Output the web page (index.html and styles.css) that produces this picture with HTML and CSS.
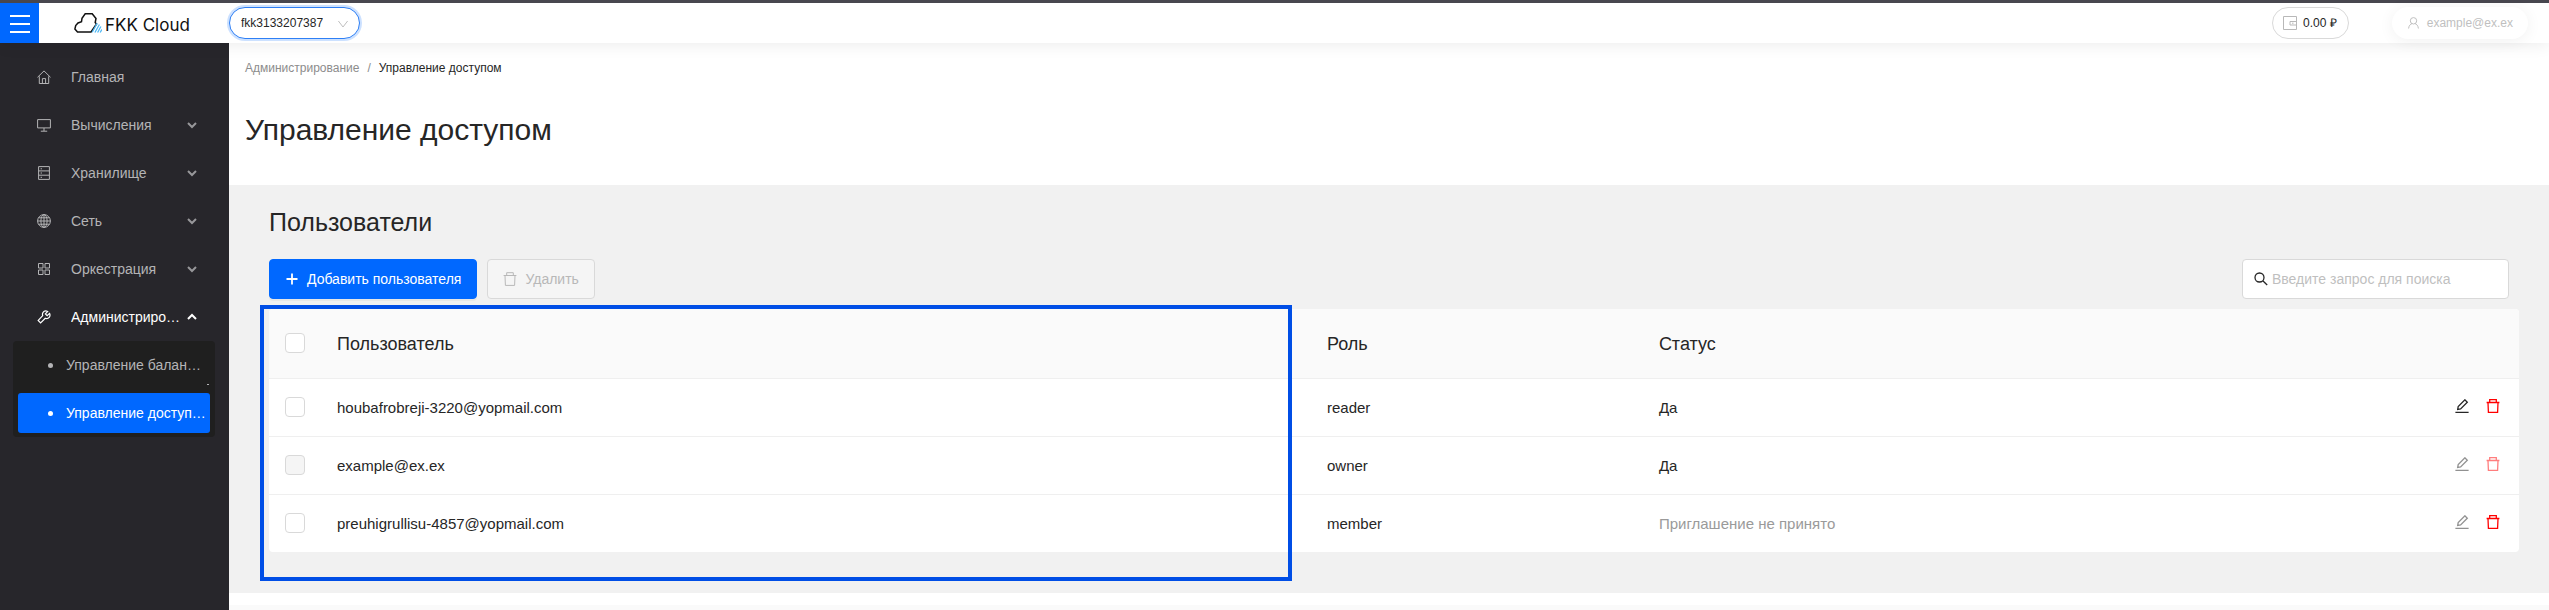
FILE: index.html
```html
<!DOCTYPE html>
<html lang="ru">
<head>
<meta charset="utf-8">
<title>Управление доступом</title>
<meta name="viewport" content="width=device-width, initial-scale=1">
<link rel="stylesheet" href="styles.css">
</head>
<body>
<svg class="sprite" aria-hidden="true">
  <symbol id="i-trash" viewBox="0 0 14 14"><path d="M.6 3.500h12.800M3.700 3.300V.700h6.600v2.600M2 3.700l.4 9.700h9.200l.4-9.700"/></symbol>
  <symbol id="i-edit" viewBox="0 0 14 14"><path d="M.4 13.300h13.200M2.700 10.400l.5-2.900L9.900.8l2.400 2.400-6.700 6.700z"/></symbol>
  <symbol id="i-down" viewBox="0 0 10 10"><path d="M1 3l4 4 4-4"/></symbol>
  <symbol id="i-up" viewBox="0 0 10 10"><path d="M1 7l4-4 4 4"/></symbol>
</svg>

<header class="topbar">
  <button class="burger" type="button" aria-label="Меню"><span></span><span></span><span></span></button>
  <a class="logo" href="#">
    <svg class="logo-mark" viewBox="0 0 28 20" aria-hidden="true">
      <path class="logo-cloud" d="M17 19H3.500L.9 16l.8-3.500L4 10l3.500-1.200L8 5.200 11.200.800h7L22 5.500l-.8 4 1.300 1.500z"/>
      <path class="logo-rain" d="M18.200 19.300l5-9M20.900 19.500l4.500-8M23.600 19.500l3.300-6M26.200 19.500l1.600-3"/>
    </svg>
    <span>FKK Cloud</span>
  </a>
  <label class="project">
    <select class="project-select" aria-label="Проект"><option>fkk3133207387</option></select>
    <svg class="project-arrow" viewBox="0 0 10 8" aria-hidden="true"><path d="M.4 1l4.600 6 4.600-6"/></svg>
  </label>
  <div class="account">
    <button class="pill balance" type="button">
      <svg class="icon-wallet" viewBox="0 0 14 14" aria-hidden="true"><path d="M.5.500h13v13H.5zM13.500 5.500h-6.500v3.500h6.500M9 7.200h1.500"/></svg>
      <span>0.00 ₽</span>
    </button>
    <button class="pill user" type="button">
      <svg class="icon-user" viewBox="0 0 11 12" aria-hidden="true"><circle cx="5.500" cy="3.800" r="3.200"/><path d="M.6 11.500c.2-2.800 1.900-4.500 3.400-4.900M10.400 11.500c-.2-2.800-1.900-4.500-3.400-4.900"/></svg>
      <span>example@ex.ex</span>
    </button>
  </div>
</header>

<div class="layout">
  <nav class="sidebar" aria-label="Разделы">
    <ul class="menu">
      <li><a class="menu-item" href="#">
        <svg class="menu-icon" viewBox="0 0 14 14"><path d="M.5 7.300L7 .9l6.500 6.400M2.300 6.300v7.200h9.400V6.300M5.400 13.300V8.600h3.200v4.700"/></svg>
        <span class="menu-label">Главная</span></a></li>
      <li><button class="menu-item" type="button">
        <svg class="menu-icon" viewBox="0 0 14 14"><path d="M.6 1.600h12.800v8.300H.6zM7 10v3M3.800 13.200h6.400"/></svg>
        <span class="menu-label">Вычисления</span><svg class="menu-arrow"><use href="#i-down"/></svg></button></li>
      <li><button class="menu-item" type="button">
        <svg class="menu-icon" viewBox="0 0 14 14"><path d="M1.600.600h10.800v12.800H1.600zM1.600 4.900h10.800M1.600 9.200h10.800M3.600 2.800h1.400M3.600 7h1.400M3.600 11.300h1.400"/></svg>
        <span class="menu-label">Хранилище</span><svg class="menu-arrow"><use href="#i-down"/></svg></button></li>
      <li><button class="menu-item" type="button">
        <svg class="menu-icon" viewBox="0 0 14 14"><circle cx="7" cy="7" r="6.400"/><ellipse cx="7" cy="7" rx="3.100" ry="6.400"/><path d="M7 .6v12.800M.6 7h12.800M1.600 3.800h10.800M1.600 10.200h10.800"/></svg>
        <span class="menu-label">Сеть</span><svg class="menu-arrow"><use href="#i-down"/></svg></button></li>
      <li><button class="menu-item" type="button">
        <svg class="menu-icon" viewBox="0 0 14 14"><path d="M1.500 1.500h4.500v4.500H1.500zM8 1.500h4.500v4.500H8zM1.500 8h4.500v4.500H1.500zM8 8h4.500v4.500H8z"/></svg>
        <span class="menu-label">Оркестрация</span><svg class="menu-arrow"><use href="#i-down"/></svg></button></li>
      <li><button class="menu-item menu-item--open" type="button" aria-expanded="true">
        <svg class="menu-icon" viewBox="0 0 14 14"><path d="M12.500 3.400L10.200 5.700 8.400 3.900l2.300-2.400C9 .7 7 1 6.100 2.400c-.8 1.100-.8 2.200-.4 3.300L1.200 10.400l2.400 2.500 4.700-4.600c1.400.5 2.900.2 3.900-1 .9-1.100 1-2.600.3-3.900z"/></svg>
        <span class="menu-label">Администрирование</span><svg class="menu-arrow"><use href="#i-up"/></svg></button>
        <ul class="submenu">
          <li><a class="submenu-item submenu-item--clipped" href="#"><span class="menu-label">Управление балансом</span></a></li>
          <li><a class="submenu-item submenu-item--active" href="#" aria-current="page"><span class="menu-label">Управление доступом</span></a></li>
        </ul>
      </li>
    </ul>
  </nav>

  <main class="content">
    <div class="page-head">
      <nav class="breadcrumbs" aria-label="Путь">
        <a href="#">Администрирование</a><span class="slash">/</span><span class="current">Управление доступом</span>
      </nav>
      <h1 class="page-title">Управление доступом</h1>
    </div>

    <section class="panel">
      <h2 class="panel-title">Пользователи</h2>
      <div class="toolbar">
        <button class="btn btn--primary" type="button">
          <svg class="btn-icon" viewBox="0 0 12 12" aria-hidden="true"><path d="M6 .5v11M.5 6h11"/></svg>
          <span>Добавить пользователя</span>
        </button>
        <button class="btn" type="button" disabled>
          <svg class="btn-icon btn-icon--thin"><use href="#i-trash"/></svg>
          <span>Удалить</span>
        </button>
        <label class="search">
          <svg class="search-icon" viewBox="0 0 14 14" aria-hidden="true"><circle cx="5.500" cy="5.500" r="4.500"/><path d="M8.800 8.800l4.400 4.200"/></svg>
          <input class="search-input" type="search" placeholder="Введите запрос для поиска" aria-label="Поиск">
        </label>
      </div>

      <div class="table-wrap">
        <table class="users">
          <thead>
            <tr><th class="col-check"><input class="check" type="checkbox" aria-label="Выбрать всех"></th><th class="col-user">Пользователь</th><th class="col-role">Роль</th><th class="col-status">Статус</th><th class="col-actions" aria-label="Действия"></th></tr>
          </thead>
          <tbody>
            <tr>
              <td><input class="check" type="checkbox" aria-label="houbafrobreji-3220@yopmail.com"></td><td>houbafrobreji-3220@yopmail.com</td><td>reader</td><td>Да</td>
              <td><div class="actions"><button class="act" type="button" aria-label="Изменить"><svg><use href="#i-edit"/></svg></button><button class="act act--delete" type="button" aria-label="Удалить"><svg><use href="#i-trash"/></svg></button></div></td>
            </tr>
            <tr>
              <td><input class="check" type="checkbox" disabled aria-label="example@ex.ex"></td><td>example@ex.ex</td><td>owner</td><td>Да</td>
              <td><div class="actions"><button class="act" type="button" disabled aria-label="Изменить"><svg><use href="#i-edit"/></svg></button><button class="act act--delete" type="button" disabled aria-label="Удалить"><svg><use href="#i-trash"/></svg></button></div></td>
            </tr>
            <tr>
              <td><input class="check" type="checkbox" aria-label="preuhigrullisu-4857@yopmail.com"></td><td>preuhigrullisu-4857@yopmail.com</td><td>member</td><td class="muted">Приглашение не принято</td>
              <td><div class="actions"><button class="act" type="button" disabled aria-label="Изменить"><svg><use href="#i-edit"/></svg></button><button class="act act--delete" type="button" aria-label="Удалить"><svg><use href="#i-trash"/></svg></button></div></td>
            </tr>
          </tbody>
        </table>
        <div class="highlight" aria-hidden="true"></div>
      </div>
    </section>
    <footer class="footer"></footer>
  </main>
</div>
</body>
</html>
```
FILE: styles.css
```css
* {
  box-sizing: border-box;
}

body {
  margin: 0;
  min-height: 100vh;
  display: flex;
  flex-direction: column;
  font: 14px/20px "Liberation Sans", Arial, sans-serif;
  color: #262626;
  background: #fff;
}

button,
input,
select {
  font: inherit;
  color: inherit;
}

button {
  margin: 0;
  padding: 0;
  border: 0;
  background: none;
  cursor: pointer;
}

a {
  color: inherit;
  text-decoration: none;
}

ul {
  margin: 0;
  padding: 0;
  list-style: none;
}

svg {
  flex: none;
  fill: none;
  stroke: currentColor;
}

.sprite {
  position: absolute;
  width: 0;
  height: 0;
}

/* Top bar */
.topbar {
  position: relative;
  z-index: 1;
  display: flex;
  align-items: stretch;
  height: 43px;
  padding-right: 21px;
  border-top: 3px solid #48474f;
  background: #fff;
  box-shadow: 0 2px 16px rgba(0, 0, 0, 0.08);
  font-size: 12px;
}

.burger {
  display: flex;
  flex-direction: column;
  align-items: center;
  justify-content: center;
  gap: 6px;
  width: 39px;
  padding-top: 2px;
  background: #0068ff;
}

.burger span {
  width: 20px;
  height: 2px;
  background: #fff;
}

.logo {
  display: flex;
  align-items: center;
  gap: 3px;
  width: 190px;
  padding: 4px 0 0 35px;
  color: #111;
  font: 17px/20px Inter, sans-serif;
}

.logo-mark {
  width: 28px;
  height: 20px;
  margin-bottom: 4px;
}

.logo-cloud {
  stroke: #111;
  stroke-width: 1.5;
}

.logo-rain {
  stroke: #4db8f5;
  stroke-width: 1.3;
}

.project {
  position: relative;
  align-self: center;
}

.project-select {
  appearance: none;
  display: block;
  width: 131px;
  height: 32px;
  padding: 0 36px 0 11px;
  border: 1px solid #2e7ff5;
  border-radius: 16px;
  outline: 0;
  background: #fff;
  box-shadow: 0 0 0 2px rgba(0, 104, 255, 0.2);
}

.project-arrow {
  position: absolute;
  top: 13px;
  right: 12px;
  width: 10px;
  height: 8px;
  color: #bfbfbf;
  pointer-events: none;
}

.account {
  display: flex;
  align-items: center;
  gap: 43px;
  margin-left: auto;
}

.pill {
  display: flex;
  align-items: center;
  height: 32px;
  border-radius: 16px;
  background: #fff;
}

.balance {
  gap: 6px;
  padding: 0 11px 0 10px;
  border: 1px solid #d9d9d9;
}

.icon-wallet {
  width: 14px;
  height: 14px;
  color: #b8b8b8;
}

.user {
  gap: 8px;
  padding: 0 15px 0 16px;
  color: #bfbfbf;
  box-shadow: 0 2px 16px rgba(0, 0, 0, 0.06);
}

.icon-user {
  width: 11px;
  height: 12px;
}

/* Sidebar */
.layout {
  flex: 1;
  display: flex;
}

.sidebar {
  flex: none;
  width: 229px;
  padding-top: 10px;
  background: #27262b;
  color: #b4b4b6;
}

.menu-item {
  display: flex;
  align-items: center;
  width: 100%;
  height: 48px;
  padding: 0 32px 0 37px;
  text-align: left;
}

.menu-item--open {
  color: #fff;
}

.menu-icon {
  width: 14px;
  height: 14px;
  margin-right: 20px;
}

.menu-item--open .menu-icon {
  stroke-width: 1.2;
}

.menu-label {
  flex: 1;
  overflow: hidden;
  white-space: nowrap;
  text-overflow: ellipsis;
}

.menu-arrow {
  width: 10px;
  height: 10px;
  margin-left: 6px;
  opacity: 0.8;
  stroke-width: 2;
}

.menu-item--open .menu-arrow {
  opacity: 1;
}

.submenu {
  display: flex;
  flex-direction: column;
  gap: 8px;
  margin: 0 14px 0 13px;
  padding: 4px 5px;
  border-radius: 4px;
  background: #1f1f1f;
}

.submenu-item {
  position: relative;
  display: flex;
  align-items: center;
  height: 40px;
  padding: 0 4px 0 30px;
  border-radius: 3px;
}

.submenu-item::before {
  content: "";
  flex: none;
  width: 5px;
  height: 5px;
  margin-right: 13px;
  border-radius: 50%;
  background: currentColor;
}

.submenu-item--clipped::after {
  content: "";
  position: absolute;
  right: 1px;
  bottom: 0;
  width: 2px;
  height: 1px;
  background: currentColor;
}

.submenu-item--active {
  background: #0068ff;
  color: #fff;
}

/* Content */
.content {
  flex: 1;
  min-width: 0;
  display: flex;
  flex-direction: column;
}

.page-head {
  padding: 16px 16px 35px;
}

.breadcrumbs {
  display: flex;
  gap: 8px;
  font-size: 12px;
  line-height: 18px;
  color: #8c8c8c;
}

.breadcrumbs .current {
  color: #262626;
}

.page-title {
  margin: 33px 0 0;
  font-size: 30px;
  line-height: 40px;
  font-weight: 400;
}

.panel {
  padding: 21px 30px 41px 40px;
  background: #f1f1f1;
}

.panel-title {
  margin: 0;
  font-size: 25px;
  line-height: 32px;
  font-weight: 400;
}

.toolbar {
  display: flex;
  gap: 10px;
  margin: 21px 10px 10px 0;
}

.btn {
  display: flex;
  align-items: center;
  gap: 8px;
  height: 40px;
  padding: 0 15px;
  border: 1px solid #d9d9d9;
  border-radius: 4px;
  background: #f5f5f5;
}

.btn:disabled {
  color: #b8b8b8;
}

.btn--primary {
  border-color: #0068ff;
  background: #0068ff;
  color: #fff;
  box-shadow: 0 2px 0 rgba(0, 0, 0, 0.04);
}

.btn-icon {
  width: 14px;
  height: 12px;
  stroke-width: 1.8;
}

.btn-icon--thin {
  height: 14px;
  stroke-width: 1;
}

.search {
  display: flex;
  align-items: center;
  gap: 4px;
  width: 267px;
  height: 40px;
  margin-left: auto;
  padding: 0 11px;
  border: 1px solid #d9d9d9;
  border-radius: 4px;
  background: #fff;
}

.search-icon {
  width: 14px;
  height: 14px;
  stroke-width: 1.3;
}

.search-input {
  flex: 1;
  min-width: 0;
  padding: 0;
  border: 0;
  outline: 0;
  background: none;
}

.search-input::placeholder {
  color: #bfbfbf;
  opacity: 1;
}

/* Users table */
.table-wrap {
  position: relative;
}

.users {
  width: 100%;
  table-layout: fixed;
  border-spacing: 0;
  border-radius: 4px;
  overflow: hidden;
  background: #fff;
  font-size: 15px;
}

.users th,
.users td {
  height: 58px;
  padding: 0 16px;
  border-bottom: 1px solid #efefef;
  text-align: left;
  font-weight: 400;
}

.users th {
  height: 70px;
  background: #fafafa;
  font-size: 18px;
}

.users tr:last-child td {
  height: 57px;
  border-bottom: 0;
}

.users thead tr:last-child th {
  border-bottom: 1px solid #efefef;
}

.col-check {
  width: 52px;
}

.col-user {
  width: 44%;
}

.col-role {
  width: 14.75%;
}

.users .muted {
  color: #9a9a9a;
}

.check {
  appearance: none;
  display: block;
  width: 20px;
  height: 20px;
  margin: 0 0 2px;
  border: 1px solid #d9d9d9;
  border-radius: 4px;
  background: #fff;
}

.check:disabled {
  background: #f5f5f5;
}

.actions {
  display: flex;
  justify-content: flex-end;
  gap: 17px;
  padding: 0 3px 3px 0;
}

.act svg {
  display: block;
  width: 14px;
  height: 14px;
  stroke-width: 1.3;
}

.act--delete {
  color: #ff0000;
}

.act:disabled {
  opacity: 0.5;
}

.highlight {
  position: absolute;
  top: -4px;
  bottom: -29px;
  left: -9px;
  width: 45.85%;
  border: 4px solid #004ee6;
  pointer-events: none;
}

.footer {
  flex: 1;
  margin-top: 12px;
  background: #fafafa;
}
```
